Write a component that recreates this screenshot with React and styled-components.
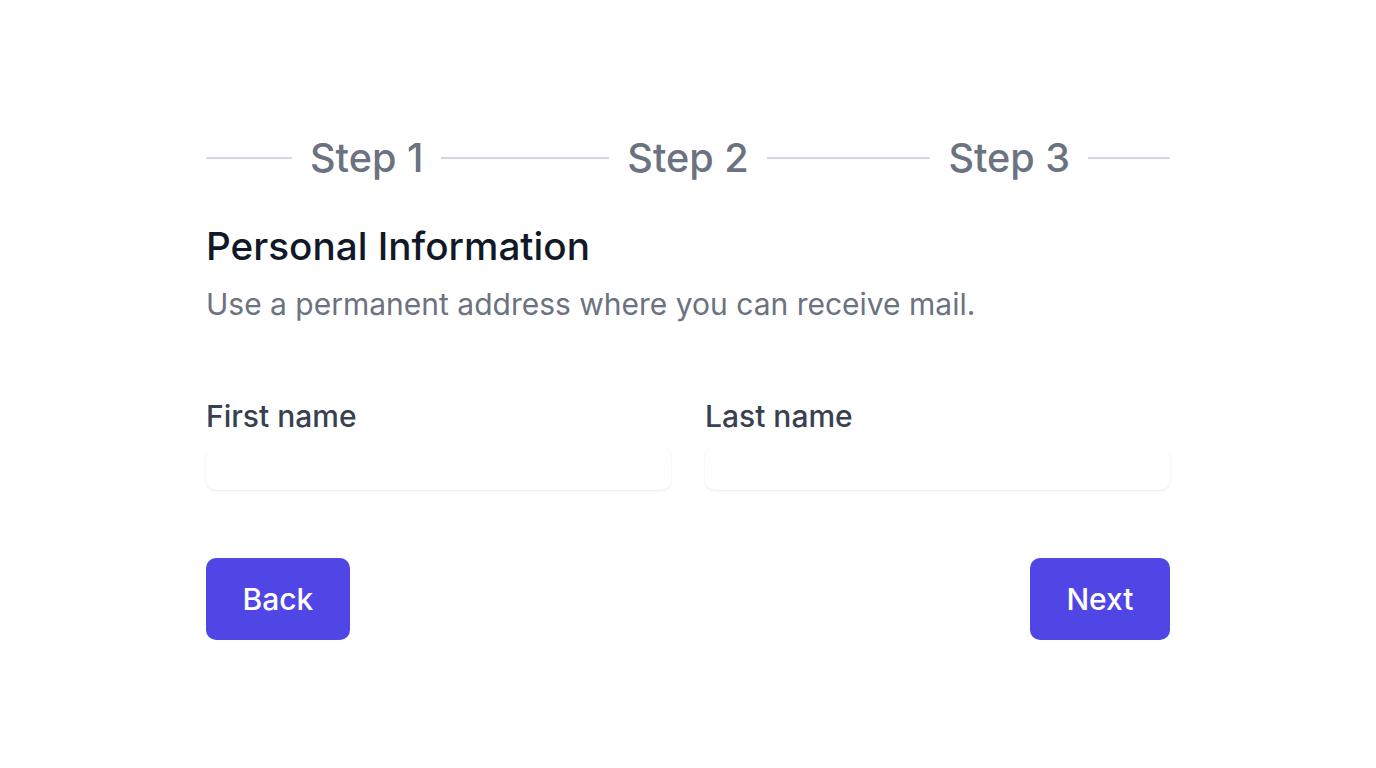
import React from 'react'
import styled, { createGlobalStyle } from 'styled-components'

const GlobalStyle = createGlobalStyle`
  body {
    margin: 0;
    background: #ffffff;
    font-family: Inter, 'Noto Sans', sans-serif;
  }
`

const steps = ['Step 1', 'Step 2', 'Step 3']

const App = () => {
  return (
    <>
      <GlobalStyle />
      <Page>
        <Wizard>
          <Steps>
            {steps.map((step) => (
              <StepItem key={step}>
                <Line />
                <StepLabel>{step}</StepLabel>
                <Line />
              </StepItem>
            ))}
          </Steps>

          <Heading>Personal Information</Heading>
          <Subtitle>Use a permanent address where you can receive mail.</Subtitle>

          <Fields>
            <Field>
              <Label htmlFor='first-name'>First name</Label>
              <Input id='first-name' type='text' />
            </Field>
            <Field>
              <Label htmlFor='last-name'>Last name</Label>
              <Input id='last-name' type='text' />
            </Field>
          </Fields>

          <Actions>
            <Button type='button'>Back</Button>
            <Button type='button'>Next</Button>
          </Actions>
        </Wizard>
      </Page>
    </>
  )
}

const Page = styled.div`
  min-height: 768px;
  padding-top: 134px;
  box-sizing: border-box;
`
const Wizard = styled.div`
  width: 964px;
  margin: 0 auto;
`
const Steps = styled.div`
  display: flex;
  align-items: center;
`
const StepItem = styled.div`
  flex: 1;
  display: flex;
  align-items: center;
  gap: 18px;
`
const Line = styled.div`
  flex: 1;
  height: 2px;
  background-color: #d4d5e0;
`
const StepLabel = styled.span`
  font-size: 39.6px;
  line-height: 48px;
  font-weight: 500;
  color: #6b7280;
`
const Heading = styled.h2`
  margin: 41px 0 0;
  font-size: 38.7px;
  line-height: 46px;
  font-weight: 500;
  color: #111827;
`
const Subtitle = styled.p`
  margin: 15px 0 0;
  font-size: 30px;
  line-height: 40px;
  color: #6b7280;
`
const Fields = styled.div`
  display: grid;
  grid-template-columns: 1fr 1fr;
  gap: 34px;
  margin-top: 72px;
`
const Field = styled.div`
  display: flex;
  flex-direction: column;
  gap: 11px;
`
const Label = styled.label`
  font-size: 30px;
  line-height: 40px;
  font-weight: 500;
  color: #374151;
`
const Input = styled.input`
  height: 43px;
  border: none;
  border-radius: 10px;
  background: #ffffff;
  box-shadow: 0 1px 3px 0 rgb(0 0 0 / 7%), 0 1px 2px -1px rgb(0 0 0 / 7%);
  outline: none;
  padding: 0 14px;
  font-family: inherit;
  font-size: 24px;
`
const Actions = styled.div`
  display: flex;
  justify-content: space-between;
  margin-top: 68px;
`
const Button = styled.button`
  height: 82px;
  padding: 0 36.5px;
  border: none;
  border-radius: 10px;
  background-color: #4f46e5;
  color: #ffffff;
  font-family: inherit;
  font-size: 30px;
  font-weight: 500;
  cursor: pointer;
`

export default App
